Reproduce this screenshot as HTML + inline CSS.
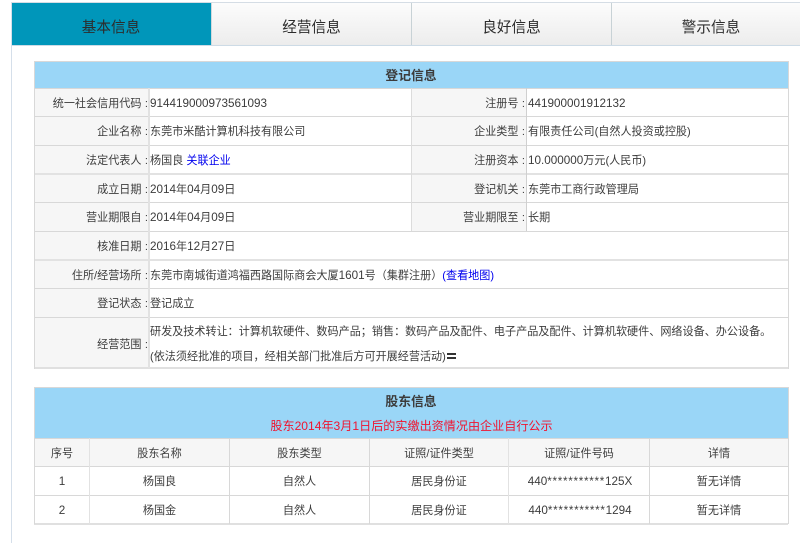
<!DOCTYPE html>
<html lang="zh"><head><meta charset="utf-8"><title>基本信息</title>
<style>
html,body{margin:0;padding:0;background:#fff}
#p{position:relative;width:800px;height:543px;overflow:hidden;background:#fff;font:11.1px/16px "Liberation Sans","Noto Sans CJK SC",sans-serif;color:#3c3c3c;filter:blur(.3px)}
#p div{position:absolute;white-space:nowrap}
.tab{top:3px;height:42px;line-height:50px;font-size:14.6px;text-align:center;color:#2c2c2c;background:linear-gradient(#fcfcfc,#ececec)}
.h{background:#d8d8d8;height:1px;left:34px;width:754px}
.v{background:#d8d8d8;width:1px}
.f{background:#f6f6f6}
.l{text-align:right;width:112px}
.l i{display:inline-block;width:6.5px;font-style:normal;text-align:right}
.c{text-align:center}
.b{font-weight:bold;color:#3c3c3c;font-size:12.8px;text-align:center}
.n{font-size:11.7px}
.s{font-size:11.7px;letter-spacing:.7px}
a{color:#00e;text-decoration:none}
</style></head><body><div id="p">
<div style="left:11px;top:2px;width:789px;height:1px;background:#d5dde5"></div>
<div style="left:11px;top:2px;width:1px;height:541px;background:#d5dfea"></div>
<div class="tab" style="left:12px;width:199px;background:#0096ba;text-indent:-1px">基本信息</div>
<div class="tab" style="left:212px;width:199px">经营信息</div>
<div class="tab" style="left:412px;width:199px">良好信息</div>
<div class="tab" style="left:612px;width:188px;text-indent:10px">警示信息</div>
<div style="left:211px;top:3px;width:1px;height:42px;background:#d0d8dc"></div>
<div style="left:411px;top:3px;width:1px;height:42px;background:#c8d2d6"></div>
<div style="left:611px;top:3px;width:1px;height:42px;background:#c8d2d6"></div>
<div style="left:12px;top:45px;width:788px;height:1px;background:#cddbe6"></div>

<!-- table 1 -->
<div style="left:35px;top:62px;width:753px;height:26px;background:#9ad6f7"></div>
<div class="f" style="left:35px;top:88px;width:113px;height:280px"></div>
<div class="f" style="left:412px;top:88px;width:114px;height:143px"></div>
<div class="h" style="top:61px"></div>
<div class="h" style="top:88px"></div>
<div class="h" style="top:116px"></div>
<div class="h" style="top:145px"></div>
<div class="h" style="top:173px;height:2px;background:#e2e2e2"></div>
<div class="h" style="top:202px"></div>
<div class="h" style="top:231px"></div>
<div class="h" style="top:259px;height:2px;background:#e2e2e2"></div>
<div class="h" style="top:288px"></div>
<div class="h" style="top:317px"></div>
<div class="h" style="top:367px;height:2px;background:#e0e0e0"></div>
<div class="v" style="left:34px;top:61px;height:308px"></div>
<div class="v" style="left:788px;top:61px;height:308px"></div>
<div class="v" style="left:148px;top:88px;width:2px;height:280px;background:#e2e2e2"></div>
<div class="v" style="left:411px;top:88px;height:143px;background:#dcdcdc"></div>
<div class="v" style="left:526px;top:88px;height:143px;background:#d0d0d0"></div>

<div class="b" style="left:34px;top:68px;width:754px">登记信息</div>

<div class="l" style="left:36px;top:96px">统一社会信用代码<i>:</i></div><div class="n" style="left:150px;top:96px">914419000973561093</div>
<div class="l" style="left:36px;top:124px">企业名称<i>:</i></div><div style="left:150px;top:124px">东莞市米酷计算机科技有限公司</div>
<div class="l" style="left:36px;top:153px">法定代表人<i>:</i></div><div style="left:150px;top:153px">杨国良 <a>关联企业</a></div>
<div class="l" style="left:36px;top:182px">成立日期<i>:</i></div><div style="left:150px;top:182px"><span class="n">2014</span>年<span class="n">04</span>月<span class="n">09</span>日</div>
<div class="l" style="left:36px;top:210px">营业期限自<i>:</i></div><div style="left:150px;top:210px"><span class="n">2014</span>年<span class="n">04</span>月<span class="n">09</span>日</div>
<div class="l" style="left:36px;top:239px">核准日期<i>:</i></div><div style="left:150px;top:239px"><span class="n">2016</span>年<span class="n">12</span>月<span class="n">27</span>日</div>
<div class="l" style="left:36px;top:268px">住所/经营场所<i>:</i></div><div style="left:150px;top:268px">东莞市南城街道鸿福西路国际商会大厦<span class="n">1601</span>号（集群注册）<a>(查看地图)</a></div>
<div class="l" style="left:36px;top:296px">登记状态<i>:</i></div><div style="left:150px;top:296px">登记成立</div>
<div class="l" style="left:36px;top:337px">经营范围<i>:</i></div>
<div style="left:150px;top:324px">研发及技术转让：计算机软硬件、数码产品；销售：数码产品及配件、电子产品及配件、计算机软硬件、网络设备、办公设备。</div>
<div style="left:150px;top:349px">(依法须经批准的项目，经相关部门批准后方可开展经营活动)</div>
<div style="left:447px;top:353px;width:9px;height:2px;background:#333"></div>
<div style="left:447px;top:357px;width:9px;height:2px;background:#333"></div>

<div class="l" style="left:413px;top:96px">注册号<i>:</i></div><div class="n" style="left:528px;top:96px">441900001912132</div>
<div class="l" style="left:413px;top:124px">企业类型<i>:</i></div><div style="left:528px;top:124px">有限责任公司(自然人投资或控股)</div>
<div class="l" style="left:413px;top:153px">注册资本<i>:</i></div><div style="left:528px;top:153px"><span class="n">10.000000</span>万元(人民币)</div>
<div class="l" style="left:413px;top:182px">登记机关<i>:</i></div><div style="left:528px;top:182px">东莞市工商行政管理局</div>
<div class="l" style="left:413px;top:210px">营业期限至<i>:</i></div><div style="left:528px;top:210px">长期</div>

<!-- table 2 -->
<div style="left:35px;top:388px;width:753px;height:50px;background:#9ad6f7"></div>
<div class="f" style="left:35px;top:439px;width:753px;height:27px"></div>
<div class="h" style="top:387px"></div>
<div class="h" style="top:438px"></div>
<div class="h" style="top:466px"></div>
<div class="h" style="top:495px"></div>
<div class="h" style="top:523px;height:2px;background:#e0e0e0"></div>
<div class="v" style="left:34px;top:387px;height:137px"></div>
<div class="v" style="left:788px;top:387px;height:137px"></div>
<div class="v" style="left:89px;top:438px;height:86px;background:#e2e2e2"></div>
<div class="v" style="left:229px;top:438px;height:86px"></div>
<div class="v" style="left:369px;top:438px;height:86px"></div>
<div class="v" style="left:508px;top:438px;height:86px;background:#e2e2e2"></div>
<div class="v" style="left:649px;top:438px;height:86px"></div>

<div class="b" style="left:34px;top:394px;width:754px">股东信息</div>
<div class="c" style="left:34px;top:418px;width:755px;color:#f0142f;font-size:12.1px">股东2014年3月1日后的实缴出资情况由企业自行公示</div>

<div class="c" style="left:35px;top:446px;width:54px">序号</div>
<div class="c" style="left:90px;top:446px;width:139px">股东名称</div>
<div class="c" style="left:230px;top:446px;width:139px">股东类型</div>
<div class="c" style="left:370px;top:446px;width:138px">证照/证件类型</div>
<div class="c" style="left:509px;top:446px;width:140px">证照/证件号码</div>
<div class="c" style="left:650px;top:446px;width:138px">详情</div>

<div class="c n" style="left:35px;top:474px;width:54px">1</div>
<div class="c" style="left:90px;top:474px;width:139px">杨国良</div>
<div class="c" style="left:230px;top:474px;width:139px">自然人</div>
<div class="c" style="left:370px;top:474px;width:138px">居民身份证</div>
<div class="c n" style="left:510px;top:474px;width:140px">440<span class="s">***********</span>125X</div>
<div class="c" style="left:650px;top:474px;width:138px">暂无详情</div>

<div class="c n" style="left:35px;top:503px;width:54px">2</div>
<div class="c" style="left:90px;top:503px;width:139px">杨国金</div>
<div class="c" style="left:230px;top:503px;width:139px">自然人</div>
<div class="c" style="left:370px;top:503px;width:138px">居民身份证</div>
<div class="c n" style="left:510px;top:503px;width:140px">440<span class="s">***********</span>1294</div>
<div class="c" style="left:650px;top:503px;width:138px">暂无详情</div>
</div></body></html>
